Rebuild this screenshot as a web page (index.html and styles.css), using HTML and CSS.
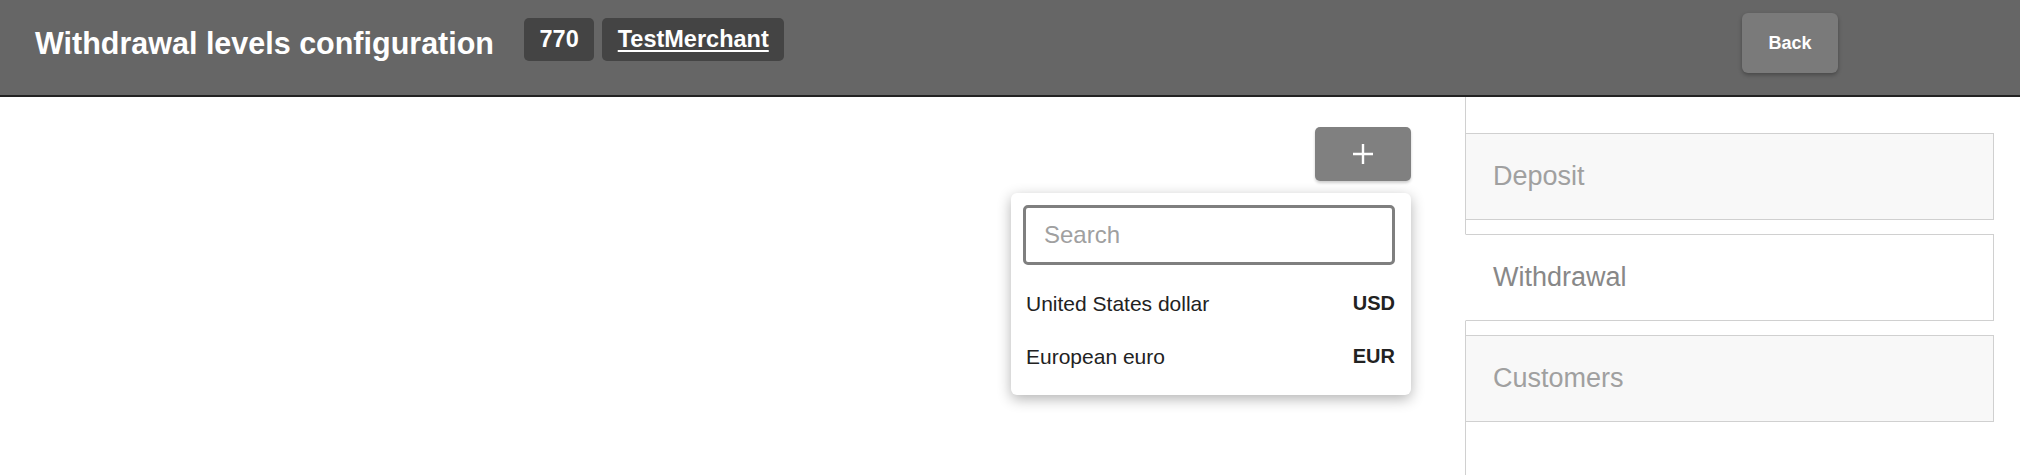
FILE: index.html
```html
<!DOCTYPE html>
<html lang="en">
<head>
    <meta charset="UTF-8">
    <meta name="viewport" content="width=device-width, initial-scale=1.0">
    <title>Withdrawal levels configuration</title>
    <link rel="stylesheet" href="styles.css">
</head>
<body>
    <header class="topbar">
        <h1 class="page-title">Withdrawal levels configuration</h1>
        <div class="badges">
            <span class="badge">770</span>
            <a class="badge badge-link" href="#">TestMerchant</a>
        </div>
        <button class="back-btn" type="button">Back</button>
    </header>

    <div class="layout">
        <main class="content">
            <div class="add-wrap">
                <button class="add-btn" type="button" aria-label="Add currency">
                    <svg width="22" height="22" viewBox="0 0 22 22">
                        <path d="M11 1v20M1 11h20" stroke="#fff" stroke-width="2.4" fill="none"/>
                    </svg>
                </button>

                <!-- currency picker, open -->
                <div class="picker">
                    <input class="picker-search" type="text" placeholder="Search">
                    <div class="picker-item">
                        <span class="picker-name">United States dollar</span>
                        <span class="picker-code">USD</span>
                    </div>
                    <div class="picker-item">
                        <span class="picker-name">European euro</span>
                        <span class="picker-code">EUR</span>
                    </div>
                </div>
            </div>
        </main>

        <nav class="sidebar">
            <div class="tab">Deposit</div>
            <div class="tab active">Withdrawal</div>
            <div class="tab">Customers</div>
        </nav>
    </div>
</body>
</html>
```

FILE: styles.css
```css
body {
    margin: 0;
    font-family: "Liberation Sans", Arial, sans-serif;
    background-color: #ffffff;
    color: #222222;
}
.topbar {
    display: flex;
    align-items: center;
    box-sizing: border-box;
    height: 97px;
    padding: 0 0 9px 35px;
    background-color: #666666;
    border-bottom: 2px solid #222222;
}
.page-title {
    margin: 0 30px 0 0;
    font-size: 30.5px;
    font-weight: bold;
    color: #ffffff;
}
.badges {
    display: flex;
    gap: 8px;
    margin-bottom: 7px;
}
.badge {
    padding: 8px 15.5px;
    font-size: 23.5px;
    line-height: 27px;
    font-weight: bold;
    color: #ffffff;
    background-color: #444444;
    border-radius: 5px;
}
.badge-link {
    text-decoration: underline;
    text-decoration-thickness: 2px;
    text-underline-offset: 3px;
}
.back-btn {
    margin-left: auto;
    margin-right: 182px;
    width: 96px;
    height: 60px;
    border: none;
    border-radius: 6px;
    background-color: #7a7a7a;
    color: #ffffff;
    font-family: "Liberation Sans", Arial, sans-serif;
    font-size: 18px;
    font-weight: bold;
    box-shadow: 0 2px 4px rgba(0, 0, 0, 0.3);
}
.layout {
    display: flex;
    min-height: 378px;
}
.content {
    flex: 1;
    display: flex;
    justify-content: flex-end;
    padding: 30px 54px 0 0;
}
.add-wrap {
    position: relative;
    height: 54px;
}
.add-btn {
    display: flex;
    align-items: center;
    justify-content: center;
    width: 96px;
    height: 54px;
    border: none;
    border-radius: 5px;
    background-color: #808080;
    box-shadow: 0 2px 3px rgba(0, 0, 0, 0.2);
}
.picker {
    position: absolute;
    top: 66px;
    right: 0;
    width: 372px;
    padding: 12px 16px 12px 12px;
    background-color: #ffffff;
    border-radius: 6px;
    box-shadow: 0 4px 14px rgba(0, 0, 0, 0.3);
}
.picker-search {
    box-sizing: border-box;
    width: 372px;
    height: 60px;
    margin: 0 0 12px 0;
    padding: 0 18px;
    border: 3px solid #7f7f7f;
    border-radius: 5px;
    font-family: "Liberation Sans", Arial, sans-serif;
    font-size: 24px;
    outline: none;
}
.picker-search::placeholder {
    color: #a0a0a0;
}
.picker-item {
    display: flex;
    align-items: center;
    justify-content: space-between;
    height: 53px;
    padding-left: 3px;
}
.picker-name {
    font-size: 21px;
}
.picker-code {
    font-size: 20px;
    font-weight: bold;
}
.sidebar {
    width: 528px;
    padding: 36px 26px 0 0;
    border-left: 1px solid #d0d0d0;
}
.tab {
    display: flex;
    align-items: center;
    height: 85px;
    margin: 0 0 14px -1px;
    padding-left: 27px;
    border: 1px solid #d0d0d0;
    background-color: #f8f8f8;
    color: #a0a0a0;
    font-size: 27px;
}
.tab.active {
    background-color: #ffffff;
    border-left-color: #ffffff;
    color: #888888;
}
```
